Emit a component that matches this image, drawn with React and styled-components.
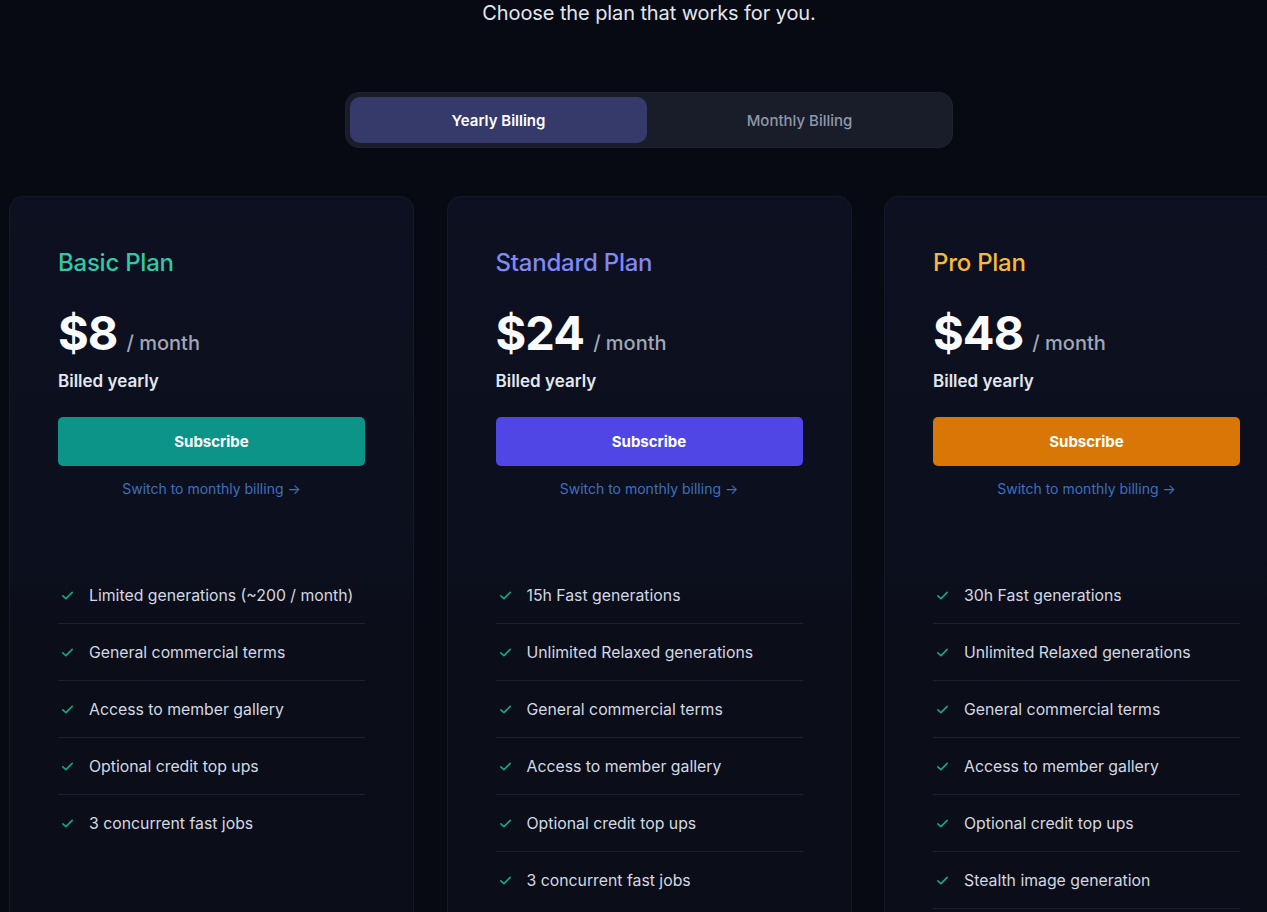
import React, { useState } from "react";
import styled, { createGlobalStyle } from "styled-components";

/* ---------------- GLOBAL ---------------- */

const GlobalStyle = createGlobalStyle`
  html, body {
    margin: 0;
    padding: 0;
    background: #080a13;
    overflow: hidden;
  }
  body {
    font-family: Inter, "Noto Sans", "Liberation Sans", sans-serif;
    color: #e5e7eb;
    -webkit-font-smoothing: antialiased;
  }
  * { box-sizing: border-box; }
`;

/* ---------------- LAYOUT ---------------- */

/* the page is a little wider than the window, so its centre sits right of the viewport centre */
const Page = styled.main`
  width: 1298px;
  min-height: 912px;
  background: #080a13;
  display: flex;
  flex-direction: column;
  align-items: center;
`;

const Lead = styled.p`
  margin: 0;
  font-size: 20px;
  line-height: 27px;
  color: #e2e6ee;
  letter-spacing: -0.005em;
`;

const Toggle = styled.div`
  margin-top: 65px;
  width: 608px;
  height: 56px;
  padding: 4px;
  display: grid;
  grid-template-columns: 1fr 1fr;
  gap: 4px;
  background: #191c29;
  border: 1px solid #1f2231;
  border-radius: 14px;
`;

const ToggleBtn = styled.button`
  border: none;
  border-radius: 10px;
  font-family: inherit;
  font-size: 15px;
  font-weight: ${p => (p.$active ? 600 : 500)};
  color: ${p => (p.$active ? "#ffffff" : "#8f98ab")};
  background: ${p => (p.$active ? "#363a6a" : "transparent")};
  cursor: pointer;
`;

const Cards = styled.div`
  align-self: flex-start;
  margin: 48px 0 0 9px;
  display: grid;
  grid-template-columns: repeat(3, 405px);
  gap: 32.5px;
`;

const Card = styled.section`
  border: 1px solid #161a28;
  border-radius: 14px;
  overflow: hidden;
  background: linear-gradient(to bottom, #0d1020 0%, #0c0f1d 45%, #0b0e19 60%, #0b0e19 100%);
  min-height: 740px;
`;

const CardTop = styled.div`
  padding: 50px 48px 38px;
  display: flex;
  flex-direction: column;
`;

const PlanName = styled.h2`
  margin: 0;
  font-size: 24px;
  line-height: 32px;
  font-weight: 500;
  color: ${p => p.$color};
  letter-spacing: -0.01em;
`;

const PriceRow = styled.div`
  margin-top: 26px;
  display: flex;
  align-items: baseline;
  gap: 9px;
`;

const Price = styled.span`
  font-size: 47px;
  line-height: 56px;
  font-weight: 700;
  color: #f8fafc;
  letter-spacing: -0.02em;
`;

const Per = styled.span`
  font-size: 20px;
  font-weight: 500;
  color: #a0a7b8;
`;

const Billed = styled.div`
  margin-top: 8px;
  font-size: 17px;
  line-height: 24px;
  font-weight: 600;
  color: #e3e7ef;
`;

const Subscribe = styled.button`
  margin-top: 24px;
  height: 49px;
  width: 100%;
  border: none;
  border-radius: 5px;
  background: ${p => p.$bg};
  color: #ffffff;
  font-family: inherit;
  font-size: 15px;
  font-weight: 700;
  cursor: pointer;
`;

const SwitchLink = styled.a`
  margin-top: 13px;
  align-self: center;
  font-size: 14px;
  line-height: 20px;
  color: #3f6fbf;
  text-decoration: none;
  cursor: pointer;
`;

const Features = styled.ul`
  list-style: none;
  margin: 0;
  padding: 30px 48px 40px;
`;

const Feature = styled.li`
  display: flex;
  align-items: center;
  gap: 14px;
  height: 57px;
  padding-left: 2px;
  border-bottom: ${p => (p.$divided ? "1px solid #1c2030" : "none")};
  font-size: 15.8px;
  color: #d3d8e2;
`;

const Check = () => (
  <svg width="15" height="15" viewBox="0 0 24 24" fill="none"
    stroke="#14a77f" strokeWidth="2.6" strokeLinecap="round" strokeLinejoin="round">
    <path d="M4.5 12.5l5 4.5L19.5 7" />
  </svg>
);

/* ---------------- DATA ---------------- */

const plans = [
  {
    name: "Basic Plan",
    color: "#2fc9a8",
    button: "#0d9488",
    price: "$8",
    features: [
      "Limited generations (~200 / month)",
      "General commercial terms",
      "Access to member gallery",
      "Optional credit top ups",
      "3 concurrent fast jobs"
    ]
  },
  {
    name: "Standard Plan",
    color: "#8088f4",
    button: "#4f46e5",
    price: "$24",
    features: [
      "15h Fast generations",
      "Unlimited Relaxed generations",
      "General commercial terms",
      "Access to member gallery",
      "Optional credit top ups",
      "3 concurrent fast jobs"
    ]
  },
  {
    name: "Pro Plan",
    color: "#f6b93b",
    button: "#d97706",
    price: "$48",
    more: true,
    features: [
      "30h Fast generations",
      "Unlimited Relaxed generations",
      "General commercial terms",
      "Access to member gallery",
      "Optional credit top ups",
      "Stealth image generation"
    ]
  }
];

/* ---------------- COMPONENT ---------------- */

export default function App() {
  const [yearly, setYearly] = useState(true);

  return (
    <Page>
      <GlobalStyle />
      <Lead>Choose the plan that works for you.</Lead>

      <Toggle>
        <ToggleBtn $active={yearly} onClick={() => setYearly(true)}>Yearly Billing</ToggleBtn>
        <ToggleBtn $active={!yearly} onClick={() => setYearly(false)}>Monthly Billing</ToggleBtn>
      </Toggle>

      <Cards>
        {plans.map(plan => (
          <Card key={plan.name}>
            <CardTop>
              <PlanName $color={plan.color}>{plan.name}</PlanName>
              <PriceRow>
                <Price>{plan.price}</Price>
                <Per>/ month</Per>
              </PriceRow>
              <Billed>Billed yearly</Billed>
              <Subscribe $bg={plan.button}>Subscribe</Subscribe>
              <SwitchLink>Switch to monthly billing →</SwitchLink>
            </CardTop>
            <Features>
              {plan.features.map((f, i) => (
                <Feature key={f} $divided={plan.more || i < plan.features.length - 1}>
                  <Check />
                  {f}
                </Feature>
              ))}
            </Features>
          </Card>
        ))}
      </Cards>
    </Page>
  );
}
